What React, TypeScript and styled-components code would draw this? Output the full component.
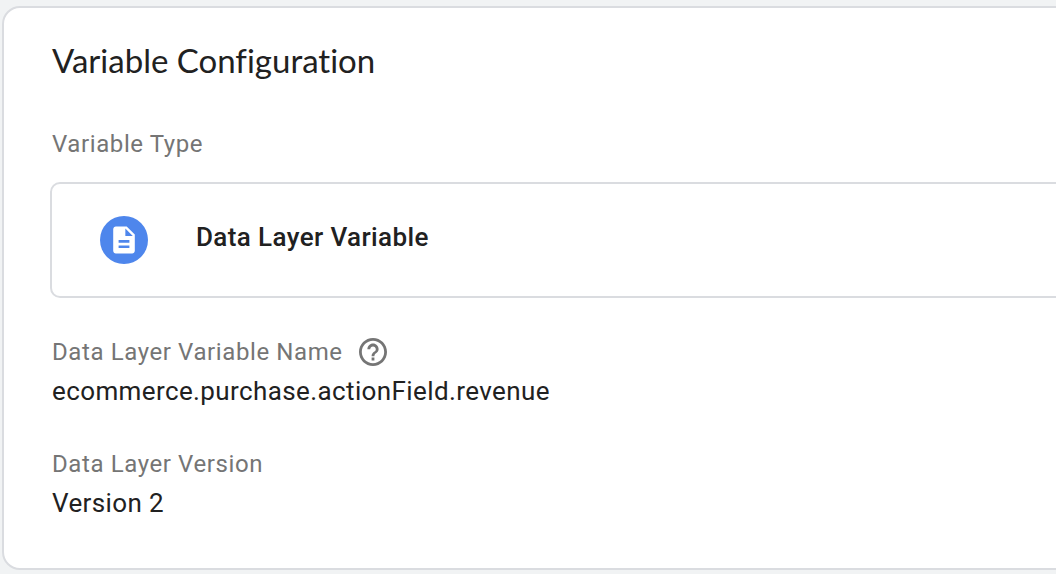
import React from "react";
import styled, { createGlobalStyle } from "styled-components";

const GlobalStyle = createGlobalStyle`
  * { box-sizing: border-box; }
  body {
    margin: 0;
    background: #f1f3f4;
    color: #212121;
    font-family: Roboto, "Liberation Sans", sans-serif;
    overflow-x: hidden;
  }
`;

const Card = styled.main`
  margin: 6px -24px 4px 2px;
  padding: 32px 0 46px 48px;
  border: 2px solid #dadce0;
  border-radius: 18px;
  background: #fff;
`;

const Title = styled.h1`
  margin: 0 0 48px;
  font-family: Lato, sans-serif;
  font-size: 33px;
  line-height: 40px;
  font-weight: 400;
  font-variant-ligatures: none;
`;

const Label = styled.div`
  display: flex;
  align-items: center;
  gap: 16px;
  font-size: 24px;
  line-height: 32px;
  letter-spacing: 0.025em;
  color: #757575;
`;

const TypeButton = styled.button`
  display: flex;
  align-items: flex-start;
  gap: 48px;
  width: 100%;
  margin: 22px 0 38px -2px;
  padding: 32px 48px;
  border: 2px solid #dadce0;
  border-radius: 10px;
  background: #fff;
  color: inherit;
  font: 500 26px/42px Roboto, "Liberation Sans", sans-serif;
  letter-spacing: 0.015em;
  text-align: left;
`;

const Fields = styled.dl`
  display: grid;
  gap: 38px;
  margin: 0;
`;

const Value = styled.dd`
  margin: 4px 0 0;
  font-size: 26px;
  line-height: 38px;
  letter-spacing: 0.015em;
`;

const HelpButton = styled.button`
  display: flex;
  padding: 0;
  border: 0;
  background: none;
  color: #757575;
`;

const DocumentIcon = () => (
  <svg width="48" height="48" viewBox="0 0 48 48" aria-hidden="true">
    <circle cx="24" cy="24" r="24" fill="#4e86ec" />
    <path
      fill="#fff"
      transform="translate(7.8 7.800) scale(1.350)"
      d="M14 2H6c-1.100 0-1.990.9-1.990 2L4 20c0 1.100.89 2 1.990 2H18c1.100 0 2-.9 2-2V8l-6-6zm2 16H8v-2h8v2zm0-4H8v-2h8v2zm-3-5V3.500L18.500 9H13z"
    />
  </svg>
);

const HelpIcon = () => (
  <svg width="28" height="28" viewBox="2 2 20 20" fill="currentColor" aria-hidden="true">
    <path d="M11 18h2v-2h-2v2zm1-16C6.480 2 2 6.480 2 12s4.480 10 10 10 10-4.480 10-10S17.520 2 12 2zm0 18c-4.410 0-8-3.590-8-8s3.590-8 8-8 8 3.590 8 8-3.590 8-8 8zm0-14c-2.210 0-4 1.790-4 4h2c0-1.100.9-2 2-2s2 .9 2 2c0 2-3 1.750-3 5h2c0-2.250 3-2.500 3-5 0-2.210-1.790-4-4-4z" />
  </svg>
);

export default function App() {
  return (
    <>
      <GlobalStyle />
      <Card>
        <Title>Variable Configuration</Title>
        <Label id="variable-type">Variable Type</Label>
        <TypeButton type="button" aria-describedby="variable-type">
          <DocumentIcon />
          <span>Data Layer Variable</span>
        </TypeButton>
        <Fields>
          <div>
            <Label as="dt">
              Data Layer Variable Name
              <HelpButton type="button" aria-label="Help"><HelpIcon /></HelpButton>
            </Label>
            <Value>ecommerce.purchase.actionField.revenue</Value>
          </div>
          <div>
            <Label as="dt">Data Layer Version</Label>
            <Value>Version 2</Value>
          </div>
        </Fields>
      </Card>
    </>
  );
}
